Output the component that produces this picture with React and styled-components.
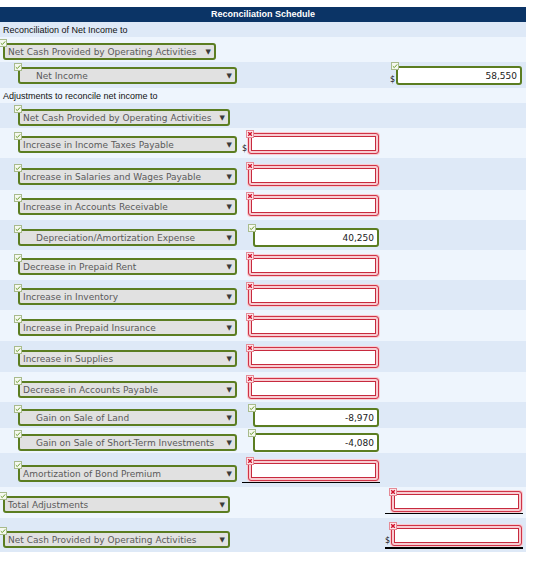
import styled, { createGlobalStyle } from "styled-components";

const GlobalStyle = createGlobalStyle`
  body {
    margin: 0;
    background: #fff;
  }
`;

const Sheet = styled.div`
  width: 526px;
  margin-top: 7px;
  font-family: "DejaVu Sans", Verdana, sans-serif;
`;

const Title = styled.div`
  height: 15px;
  background: #0b3466;
  color: #fff;
  font: bold 9px/15px "Liberation Sans", Arial, sans-serif;
  text-align: center;
`;

const Row = styled.div`
  box-sizing: border-box;
  height: ${(p) => p.$h}px;
  padding-bottom: ${(p) => p.$pb}px;
  background: ${(p) => (p.$alt ? "#dee9f7" : "#eef5fd")};
  display: grid;
  grid-template-columns: 243px 138px 145px;
  align-items: end;
`;

const Label = styled.div`
  grid-column: 1 / -1;
  align-self: center;
  padding: 0 0 0 3px;
  font: 9px "Liberation Sans", Arial, sans-serif;
  color: #111;
`;

const SelectCell = styled.div`
  grid-column: 1;
  padding-left: ${(p) => p.$indent}px;
  margin-bottom: 1px;
`;

const Select = styled.div`
  position: relative;
  box-sizing: border-box;
  width: ${(p) => p.$w}px;
  height: 17px;
  padding: 0 3px 0 ${(p) => p.$pad}px;
  display: flex;
  align-items: center;
  justify-content: space-between;
  border: 2px solid #5b7d21;
  border-radius: 3px;
  background: #e1e1e1;
  color: #5a5a5a;
  font-size: 9px;
  white-space: nowrap;
`;

const Arrow = styled.span`
  font-size: 7px;
  color: #3a3a3a;
`;

const Marker = styled.span`
  position: absolute;
  top: ${(p) => p.$top}px;
  left: ${(p) => p.$left}px;
  box-sizing: border-box;
  width: 8px;
  height: 8px;
  display: flex;
  align-items: center;
  justify-content: center;
  border: 1px solid ${(p) => (p.$bad ? "#e58a96" : "#a8bb8c")};
  background: ${(p) => (p.$bad ? "#fde8eb" : "#f5f8ef")};
`;

const AmountCell = styled.div`
  grid-column: ${(p) => p.$col};
  display: flex;
  justify-content: flex-end;
  padding-right: ${(p) => (p.$col === 2 ? 1 : 3)}px;
`;

const Figure = styled.div`
  display: flex;
  align-items: flex-end;
  padding: 0 1px ${(p) => (p.$rule ? 1 : 0)}px 0;
  border-bottom: ${(p) =>
    p.$rule === "double" ? "2px solid #000" : p.$rule === "single" ? "1px solid #000" : "none"};
`;

const Dollar = styled.span`
  width: 5px;
  margin-right: 1px;
  font-size: 8px;
  line-height: 10px;
  color: #111;
`;

const GoodInput = styled.div`
  position: relative;
  box-sizing: border-box;
  width: 126px;
  height: 19px;
  padding-right: 3px;
  display: flex;
  align-items: center;
  justify-content: flex-end;
  border: 2px solid #5b7d21;
  border-radius: 3px;
  background: #fff;
  color: #222;
  font-size: 9px;
`;

const BadInput = styled.div`
  position: relative;
  box-sizing: border-box;
  width: 131px;
  height: 21px;
  border: 1px solid #cf3347;
  border-radius: 3px;
  background: #fff;
  box-shadow: 0 0 0 1px #f8cdd2, inset 0 0 0 2px #f8cdd2, inset 0 0 0 3px #c72a3e;
`;

const Check = () => (
  <svg width="6" height="6" viewBox="0 0 6 6">
    <path d="M0.8 3.2 L2.3 4.6 L5.2 1.4" fill="none" stroke="#6b9d2d" strokeWidth="1" />
  </svg>
);

const Cross = () => (
  <svg width="6" height="6" viewBox="0 0 6 6">
    <path d="M1.2 1.2 L4.8 4.8 M4.8 1.2 L1.2 4.8" fill="none" stroke="#d0112b" strokeWidth="1.4" />
  </svg>
);

const Amount = ({ kind, value, dollar, rule, col }) => (
  <AmountCell $col={col}>
    <Figure $rule={rule}>
      {(dollar || rule) && <Dollar>{dollar ? "$" : ""}</Dollar>}
      {kind === "ok" ? (
        <GoodInput>
          <Marker $top={-6} $left={-7}>
            <Check />
          </Marker>
          {value}
        </GoodInput>
      ) : (
        <BadInput>
          <Marker $bad $top={-4} $left={-3}>
            <Cross />
          </Marker>
        </BadInput>
      )}
    </Figure>
  </AmountCell>
);

const NET_CASH = "Net Cash Provided by Operating Activities";

const rows = [
  { h: 15, label: "Reconciliation of Net Income to" },
  { h: 25, pb: 1, select: { text: NET_CASH, w: 213, indent: 3, pad: 3 } },
  {
    h: 26,
    pb: 3,
    select: { text: "Net Income", w: 219, indent: 18, pad: 16 },
    right: { kind: "ok", value: "58,550", dollar: true },
  },
  { h: 15, label: "Adjustments to reconcile net income to" },
  { h: 25, pb: 1, select: { text: NET_CASH, w: 212, indent: 18, pad: 3 } },
  { h: 30, pb: 4, select: { text: "Increase in Income Taxes Payable" }, mid: { kind: "bad", dollar: true } },
  { h: 32, pb: 4, select: { text: "Increase in Salaries and Wages Payable" }, mid: { kind: "bad" } },
  { h: 30, pb: 4, select: { text: "Increase in Accounts Receivable" }, mid: { kind: "bad" } },
  {
    h: 30,
    pb: 3,
    select: { text: "Depreciation/Amortization Expense", pad: 16 },
    mid: { kind: "ok", value: "40,250" },
  },
  { h: 30, pb: 4, select: { text: "Decrease in Prepaid Rent" }, mid: { kind: "bad" } },
  { h: 30, pb: 4, select: { text: "Increase in Inventory" }, mid: { kind: "bad" } },
  { h: 31, pb: 4, select: { text: "Increase in Prepaid Insurance" }, mid: { kind: "bad" } },
  { h: 31, pb: 4, select: { text: "Increase in Supplies" }, mid: { kind: "bad" } },
  { h: 30, pb: 3, select: { text: "Decrease in Accounts Payable" }, mid: { kind: "bad" } },
  {
    h: 26,
    pb: 1,
    select: { text: "Gain on Sale of Land", pad: 16 },
    mid: { kind: "ok", value: "-8,970" },
  },
  {
    h: 25,
    pb: 1,
    select: { text: "Gain on Sale of Short-Term Investments", pad: 16 },
    mid: { kind: "ok", value: "-4,080" },
  },
  {
    h: 34,
    pb: 4,
    select: { text: "Amortization of Bond Premium" },
    mid: { kind: "bad", rule: "single" },
  },
  {
    h: 31,
    pb: 4,
    select: { text: "Total Adjustments", w: 227, indent: 3 },
    right: { kind: "bad", rule: "single" },
  },
  {
    h: 34,
    pb: 3,
    select: { text: NET_CASH, w: 227, indent: 3, pad: 3 },
    right: { kind: "bad", dollar: true, rule: "double" },
  },
];

const App = () => (
  <>
    <GlobalStyle />
    <Sheet>
      <Title>Reconciliation Schedule</Title>
      {rows.map((row, i) => (
        <Row key={i} $h={row.h} $pb={row.pb ?? 0} $alt={i % 2 === 0}>
          {row.label && <Label>{row.label}</Label>}
          {row.select && (
            <SelectCell $indent={row.select.indent ?? 18}>
              <Select $w={row.select.w ?? 219} $pad={row.select.pad ?? 3}>
                <Marker $top={-6} $left={-6}>
                  <Check />
                </Marker>
                <span>{row.select.text}</span>
                <Arrow>▼</Arrow>
              </Select>
            </SelectCell>
          )}
          {row.mid && <Amount col={2} {...row.mid} />}
          {row.right && <Amount col={3} {...row.right} />}
        </Row>
      ))}
    </Sheet>
  </>
);

export default App;
